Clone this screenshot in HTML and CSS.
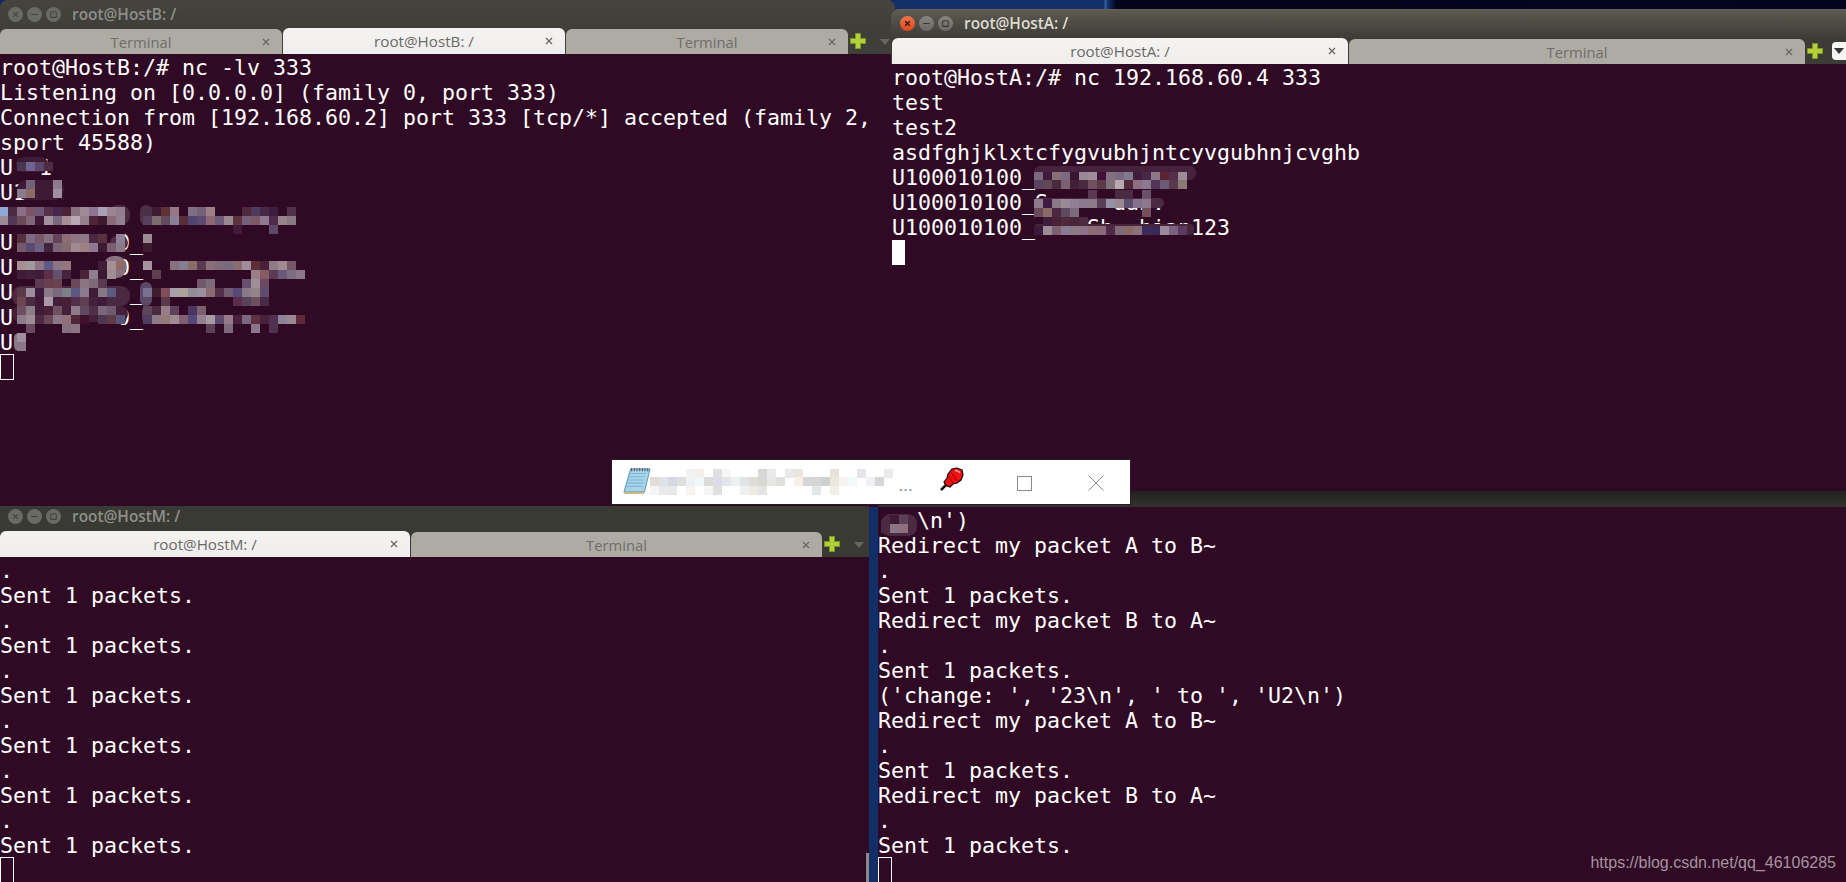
FILE: index.html
```html
<!DOCTYPE html>
<html lang="en">
<head>
<meta charset="utf-8">
<title>Terminals</title>
<link rel="stylesheet" href="styles.css">
</head>
<body>
<main class="desktop">

<section class="win win-b">
  <header class="titlebar dim"><span class="btn"><svg viewBox="0 0 16 16"><path d="M5.5 5.5l5 5M10.5 5.5l-5 5"/></svg></span><span class="btn"><svg viewBox="0 0 16 16"><path d="M4.5 8h7"/></svg></span><span class="btn"><svg viewBox="0 0 16 16"><rect x="5" y="5" width="6" height="6" rx="1"/></svg></span><span class="title">root@HostB: /</span></header>
  <nav class="tabs">
    <div class="tab tab-b"><span></span><span class="label">Terminal</span><span class="x"><svg viewBox="0 0 8 8"><path d="M1 1l6 6M7 1l-6 6"/></svg></span></div>
    <div class="tab tab-b on"><span></span><span class="label">root@HostB: /</span><span class="x"><svg viewBox="0 0 8 8"><path d="M1 1l6 6M7 1l-6 6"/></svg></span></div>
    <div class="tab tab-b"><span></span><span class="label">Terminal</span><span class="x"><svg viewBox="0 0 8 8"><path d="M1 1l6 6M7 1l-6 6"/></svg></span></div>
    <svg class="plus" viewBox="0 0 16 16"><path d="M5.5.5h5v5h5v5h-5v5h-5v-5h-5v-5h5z"/></svg>
    <span class="arrow arrow-b"></span>
  </nav>
  <div class="term">
<pre class="text">root@HostB:/# nc -lv 333
Listening on [0.0.0.0] (family 0, port 333)
Connection from [192.168.60.2] port 333 [tcp/*] accepted (family 2,
sport 45588)
U  1
U1

U        0_
U        0_
U         _
U        0_
U1
<span class="cursor hollow"></span></pre>
    <svg class="mosaic" aria-hidden="true"><g transform="translate(0,-54)">
      <rect x="16" y="157" width="32" height="15" rx="7" fill="#3d1a36"/>
      <rect x="17" y="180" width="47" height="20" rx="9" fill="#3f1a34"/>
      <rect x="108" y="205" width="22" height="20" rx="9" fill="#4a2b40"/>
      <rect x="140" y="205" width="12" height="20" rx="6" fill="#4b2f45"/>
      <rect x="110" y="236" width="18" height="14" rx="7" fill="#4f3048"/>
      <rect x="104" y="256" width="22" height="22" rx="9" fill="#8a7080"/>
      <rect x="12" y="286" width="118" height="20" rx="9" fill="#4a2a42"/>
      <rect x="140" y="282" width="12" height="24" rx="6" fill="#5a4a68"/>
      <rect x="12" y="306" width="116" height="16" rx="8" fill="#45203a"/>
      <rect x="142" y="306" width="12" height="18" rx="6" fill="#4e3d60"/>
      <rect x="14" y="333" width="12" height="18" rx="5" fill="#8a7888"/>
      <g class="cells">
        <rect x="17" y="162" fill="#4a3550"/><rect x="26" y="162" fill="#6f6390"/><rect x="35" y="162" fill="#5a4668"/><rect x="44" y="162" fill="#4f2b42"/>
        <rect x="26" y="180" fill="#75627a"/><rect x="53" y="180" fill="#8d7b90"/>
        <rect x="17" y="189" fill="#8a7a8c"/><rect x="26" y="189" fill="#8c6a66"/><rect x="53" y="189" fill="#a08fa0"/>

        <rect x="0" y="207" fill="#8ea8d8"/><rect x="8" y="207" fill="#4a2b40"/><rect x="17" y="207" fill="#8b6e85"/><rect x="26" y="207" fill="#7a5565"/><rect x="35" y="207" fill="#6e5775"/><rect x="44" y="207" fill="#54304a"/><rect x="53" y="207" fill="#45264f"/><rect x="62" y="207" fill="#4a2236"/><rect x="71" y="207" fill="#8a7080"/><rect x="80" y="207" fill="#a08a95"/><rect x="89" y="207" fill="#8b7590"/><rect x="98" y="207" fill="#aaa0b5"/><rect x="107" y="207" fill="#9b8594"/><rect x="116" y="207" fill="#917c90"/>
        <rect x="143" y="207" fill="#4b2f45"/><rect x="152" y="207" fill="#3f1a35"/><rect x="161" y="207" fill="#5e3238"/><rect x="170" y="207" fill="#957785"/><rect x="188" y="207" fill="#7e6f85"/><rect x="197" y="207" fill="#75627a"/><rect x="206" y="207" fill="#9c8088"/><rect x="242" y="207" fill="#50283c"/><rect x="251" y="207" fill="#4e3a5e"/><rect x="260" y="207" fill="#45284a"/><rect x="269" y="207" fill="#3e1c3c"/><rect x="287" y="207" fill="#4e3048"/>
        <rect x="0" y="216" fill="#9b8a95"/><rect x="8" y="216" fill="#503858"/><rect x="17" y="216" fill="#6b4a55"/><rect x="26" y="216" fill="#7c6878"/><rect x="35" y="216" fill="#3f1834"/><rect x="44" y="216" fill="#a48fa0"/><rect x="53" y="216" fill="#7a6880"/><rect x="62" y="216" fill="#a58c95"/><rect x="71" y="216" fill="#b8a8b5"/><rect x="80" y="216" fill="#958090"/><rect x="89" y="216" fill="#4f2535"/><rect x="98" y="216" fill="#3a1a30"/><rect x="107" y="216" fill="#8a6b75"/><rect x="116" y="216" fill="#918090"/>
        <rect x="143" y="216" fill="#573f5e"/><rect x="152" y="216" fill="#7d6d6a"/><rect x="161" y="216" fill="#614a5e"/><rect x="170" y="216" fill="#8a7e98"/><rect x="179" y="216" fill="#5a2c38"/><rect x="188" y="216" fill="#4f4570"/><rect x="197" y="216" fill="#5e4a6e"/><rect x="206" y="216" fill="#8d6a72"/><rect x="215" y="216" fill="#6e5a7a"/><rect x="224" y="216" fill="#9a8890"/><rect x="233" y="216" fill="#5e3340"/><rect x="242" y="216" fill="#75607a"/><rect x="251" y="216" fill="#7d5a65"/><rect x="260" y="216" fill="#907a90"/><rect x="269" y="216" fill="#4e2a4a"/><rect x="278" y="216" fill="#988488"/><rect x="287" y="216" fill="#887880"/>
        <rect x="233" y="225" fill="#42193a"/><rect x="269" y="225" fill="#5e4a68"/>

        <rect x="17" y="234" fill="#55303f"/><rect x="26" y="234" fill="#7e6a80"/><rect x="35" y="234" fill="#78586a"/><rect x="44" y="234" fill="#85707f"/><rect x="53" y="234" fill="#64445a"/><rect x="62" y="234" fill="#8c6d75"/><rect x="71" y="234" fill="#8f7580"/><rect x="80" y="234" fill="#8e7788"/><rect x="89" y="234" fill="#4a2940"/><rect x="98" y="234" fill="#5a3040"/><rect x="116" y="234" fill="#8f8098"/><rect x="143" y="234" fill="#9c8a96"/>
        <rect x="17" y="243" fill="#75596a"/><rect x="26" y="243" fill="#584a70"/><rect x="35" y="243" fill="#6f6080"/><rect x="44" y="243" fill="#432240"/><rect x="53" y="243" fill="#7d6578"/><rect x="62" y="243" fill="#856a70"/><rect x="71" y="243" fill="#a08c90"/><rect x="80" y="243" fill="#a07f80"/><rect x="89" y="243" fill="#8d7a90"/><rect x="98" y="243" fill="#3d1a34"/><rect x="107" y="243" fill="#7e5f6f"/><rect x="116" y="243" fill="#8a7a8c"/><rect x="143" y="243" fill="#3e1c30"/>

        <rect x="17" y="261" fill="#a88f95"/><rect x="26" y="261" fill="#a09a9e"/><rect x="35" y="261" fill="#8c7585"/><rect x="44" y="261" fill="#5f5a85"/><rect x="53" y="261" fill="#8a7585"/><rect x="62" y="261" fill="#96757d"/><rect x="98" y="261" fill="#3f1c3a"/><rect x="107" y="261" fill="#a58e95"/><rect x="116" y="261" fill="#8f6a66"/>
        <rect x="143" y="261" fill="#a494a0"/><rect x="170" y="261" fill="#8a6f80"/><rect x="179" y="261" fill="#847f8f"/><rect x="188" y="261" fill="#8a6e66"/><rect x="197" y="261" fill="#5a3a50"/><rect x="206" y="261" fill="#8a6f78"/><rect x="215" y="261" fill="#7f6a7a"/><rect x="224" y="261" fill="#7a6a80"/><rect x="233" y="261" fill="#886e70"/><rect x="242" y="261" fill="#a08d9b"/><rect x="251" y="261" fill="#5e2e38"/><rect x="260" y="261" fill="#4a2036"/><rect x="269" y="261" fill="#8f7a88"/><rect x="278" y="261" fill="#a08c90"/><rect x="287" y="261" fill="#78566a"/>
        <rect x="17" y="270" fill="#3f1c38"/><rect x="26" y="270" fill="#40203a"/><rect x="35" y="270" fill="#3f1c38"/><rect x="44" y="270" fill="#5e2f48"/><rect x="53" y="270" fill="#62506e"/><rect x="62" y="270" fill="#45243f"/><rect x="80" y="270" fill="#4a2438"/><rect x="89" y="270" fill="#8d7f90"/><rect x="98" y="270" fill="#3a1834"/><rect x="107" y="270" fill="#a08e94"/>
        <rect x="152" y="270" fill="#5f4050"/><rect x="251" y="270" fill="#9a7f8a"/><rect x="260" y="270" fill="#8a5c62"/><rect x="269" y="270" fill="#5a3a56"/><rect x="278" y="270" fill="#6a5a7a"/><rect x="287" y="270" fill="#7d6f80"/><rect x="296" y="270" fill="#8a7888"/>

        <rect x="35" y="279" fill="#5e3a50"/><rect x="44" y="279" fill="#6a4050"/><rect x="53" y="279" fill="#6a4550"/><rect x="71" y="279" fill="#6a4858"/><rect x="80" y="279" fill="#8c7580"/><rect x="89" y="279" fill="#7d6a78"/><rect x="98" y="279" fill="#5a3a50"/><rect x="197" y="279" fill="#6e5a6c"/><rect x="206" y="279" fill="#7d6b7a"/><rect x="242" y="279" fill="#6a5070"/><rect x="251" y="279" fill="#a08e98"/><rect x="260" y="279" fill="#6a4a62"/>
        <rect x="17" y="288" fill="#5a3a4a"/><rect x="26" y="288" fill="#9a8e9e"/><rect x="35" y="288" fill="#3f1a40"/><rect x="44" y="288" fill="#8a7a88"/><rect x="53" y="288" fill="#7a6a7c"/><rect x="62" y="288" fill="#7c8088"/><rect x="71" y="288" fill="#5e5880"/><rect x="80" y="288" fill="#8a7a8c"/><rect x="89" y="288" fill="#3f1c3a"/><rect x="98" y="288" fill="#8a7582"/><rect x="107" y="288" fill="#5c5a82"/>
        <rect x="143" y="288" fill="#7a7090"/><rect x="152" y="288" fill="#3f1c30"/><rect x="161" y="288" fill="#7e4f58"/><rect x="170" y="288" fill="#a9a0ae"/><rect x="179" y="288" fill="#aaa296"/><rect x="188" y="288" fill="#938a9a"/><rect x="197" y="288" fill="#9a8e9a"/><rect x="206" y="288" fill="#8c6a72"/><rect x="215" y="288" fill="#4f3048"/><rect x="224" y="288" fill="#6f5a70"/><rect x="233" y="288" fill="#554a78"/><rect x="242" y="288" fill="#8a7a88"/><rect x="251" y="288" fill="#938488"/><rect x="260" y="288" fill="#5e4d70"/>
        <rect x="17" y="297" fill="#6a4550"/><rect x="26" y="297" fill="#4a2a40"/><rect x="35" y="297" fill="#3f1a34"/><rect x="44" y="297" fill="#a89aa8"/><rect x="53" y="297" fill="#42203c"/><rect x="62" y="297" fill="#4a1f38"/><rect x="71" y="297" fill="#50304a"/><rect x="80" y="297" fill="#5e3f52"/><rect x="89" y="297" fill="#45203e"/><rect x="98" y="297" fill="#401a3a"/>
        <rect x="161" y="297" fill="#5a3a4a"/><rect x="233" y="297" fill="#5a2e48"/><rect x="242" y="297" fill="#58425a"/><rect x="251" y="297" fill="#6a5060"/><rect x="260" y="297" fill="#4a2a46"/>

        <rect x="17" y="306" fill="#6a5060"/><rect x="26" y="306" fill="#8c7c88"/><rect x="35" y="306" fill="#3f1c38"/><rect x="44" y="306" fill="#4a1f38"/><rect x="53" y="306" fill="#6e5060"/><rect x="71" y="306" fill="#8f7a88"/><rect x="80" y="306" fill="#5e4a60"/><rect x="89" y="306" fill="#4f3048"/><rect x="98" y="306" fill="#7a687a"/><rect x="107" y="306" fill="#6f5a70"/>
        <rect x="143" y="306" fill="#5e4558"/><rect x="152" y="306" fill="#4a2a3e"/><rect x="161" y="306" fill="#957e88"/><rect x="170" y="306" fill="#5e3f5c"/><rect x="188" y="306" fill="#4a3560"/><rect x="197" y="306" fill="#7a6070"/>
        <rect x="17" y="315" fill="#8e7a88"/><rect x="26" y="315" fill="#9c8c94"/><rect x="35" y="315" fill="#4e2840"/><rect x="44" y="315" fill="#6a4658"/><rect x="53" y="315" fill="#8a7785"/><rect x="62" y="315" fill="#8f7078"/><rect x="71" y="315" fill="#50253a"/><rect x="80" y="315" fill="#40102a"/><rect x="98" y="315" fill="#4e3850"/><rect x="107" y="315" fill="#5e3a4a"/><rect x="116" y="315" fill="#5a5278"/>
        <rect x="143" y="315" fill="#4e3d60"/><rect x="152" y="315" fill="#8f7a88"/><rect x="161" y="315" fill="#957a78"/><rect x="170" y="315" fill="#a08a94"/><rect x="179" y="315" fill="#7f5f70"/><rect x="188" y="315" fill="#54487a"/><rect x="197" y="315" fill="#938090"/><rect x="206" y="315" fill="#a89aa4"/><rect x="215" y="315" fill="#5e4a6e"/><rect x="224" y="315" fill="#957a8a"/><rect x="233" y="315" fill="#4a1f40"/><rect x="242" y="315" fill="#7a687c"/><rect x="251" y="315" fill="#603040"/><rect x="260" y="315" fill="#482038"/><rect x="269" y="315" fill="#503050"/><rect x="278" y="315" fill="#8e8298"/><rect x="287" y="315" fill="#9a8a90"/><rect x="296" y="315" fill="#5e2a38"/>
        <rect x="26" y="324" fill="#6a4a60"/><rect x="62" y="324" fill="#84707f"/><rect x="71" y="324" fill="#8a7580"/><rect x="206" y="324" fill="#5e4258"/><rect x="224" y="324" fill="#7e6a80"/><rect x="251" y="324" fill="#8a7688"/><rect x="269" y="324" fill="#4e3050"/>

        <rect x="17" y="333" fill="#a08f9e"/><rect x="17" y="342" fill="#8a7888"/>
      </g>
    </g></svg>
  </div>
</section>

<section class="win win-n">
  <header class="titlebar band"></header>
  <div class="term">
<pre class="text">   \n')
Redirect my packet A to B~
.
Sent 1 packets.
Redirect my packet B to A~
.
Sent 1 packets.
('change: ', '23\n', ' to ', 'U2\n')
Redirect my packet A to B~
.
Sent 1 packets.
Redirect my packet B to A~
.
Sent 1 packets.
<span class="cursor hollow"></span></pre>
    <svg class="mosaic" aria-hidden="true"><g transform="translate(-878,-507)">
      <rect x="881" y="514" width="36" height="22" rx="9" fill="#4a2a40"/>
      <g class="cells">
        <rect x="890" y="515" fill="#3e1a35"/><rect x="899" y="515" fill="#5a4058"/><rect x="881" y="524" fill="#4a2a3e"/><rect x="890" y="524" fill="#8a7584"/><rect x="899" y="524" fill="#8e707c"/>
      </g>
    </g></svg>
    <span class="watermark">https://blog.csdn.net/qq_46106285</span>
  </div>
</section>

<section class="win win-a">
  <header class="titlebar lit"><span class="btn red"><svg viewBox="0 0 16 16"><path d="M5.5 5.5l5 5M10.5 5.5l-5 5"/></svg></span><span class="btn"><svg viewBox="0 0 16 16"><path d="M4.5 8h7"/></svg></span><span class="btn"><svg viewBox="0 0 16 16"><rect x="5" y="5" width="6" height="6" rx="1"/></svg></span><span class="title">root@HostA: /</span></header>
  <nav class="tabs tabs-a">
    <div class="tab tab-a1 on"><span></span><span class="label">root@HostA: /</span><span class="x"><svg viewBox="0 0 8 8"><path d="M1 1l6 6M7 1l-6 6"/></svg></span></div>
    <div class="tab tab-a2"><span></span><span class="label">Terminal</span><span class="x"><svg viewBox="0 0 8 8"><path d="M1 1l6 6M7 1l-6 6"/></svg></span></div>
    <svg class="plus" viewBox="0 0 16 16"><path d="M5.5.5h5v5h5v5h-5v5h-5v-5h-5v-5h5z"/></svg>
    <span class="menu"><span class="arrow"></span></span>
  </nav>
  <div class="term term-a">
<pre class="text">root@HostA:/# nc 192.168.60.4 333
test
test2
asdfghjklxtcfygvubhjntcyvgubhnjcvghb
U100010100_
U100010100_S     uan.
U100010100_    Sh  hian123
<span class="cursor solid"></span></pre>
    <svg class="mosaic" aria-hidden="true"><g transform="translate(-891,-64)">
      <rect x="1034" y="166" width="162" height="14" rx="6" fill="#46223c"/>
      <rect x="1034" y="198" width="130" height="10" rx="5" fill="#4a2a40"/>
      <rect x="1034" y="224" width="160" height="11" rx="4" fill="#482438"/>
      <g class="cells">
        <rect x="1034" y="172" fill="#7a6a80"/><rect x="1043" y="172" fill="#3e1a3c"/><rect x="1052" y="172" fill="#8a6e78"/><rect x="1061" y="172" fill="#7a6880"/><rect x="1070" y="172" fill="#3a1430"/><rect x="1079" y="172" fill="#9a8898"/><rect x="1088" y="172" fill="#9f8d9c"/><rect x="1097" y="172" fill="#42103a"/><rect x="1106" y="172" fill="#82707f"/><rect x="1115" y="172" fill="#7a6a80"/><rect x="1124" y="172" fill="#7f7a8c"/><rect x="1133" y="172" fill="#3e1c3a"/><rect x="1142" y="172" fill="#45284a"/><rect x="1151" y="172" fill="#8c7888"/><rect x="1160" y="172" fill="#5a2430"/><rect x="1169" y="172" fill="#52304a"/><rect x="1178" y="172" fill="#9c8c98"/>
        <rect x="1034" y="180" fill="#5a4460"/><rect x="1043" y="180" fill="#614858"/><rect x="1052" y="180" fill="#4a2a3e"/><rect x="1061" y="180" fill="#7a6070"/><rect x="1070" y="180" fill="#42203a"/><rect x="1079" y="180" fill="#4a2a3e"/><rect x="1088" y="180" fill="#6e5060"/><rect x="1097" y="180" fill="#5a3a48"/><rect x="1106" y="180" fill="#80707a"/><rect x="1115" y="180" fill="#b5aab0"/><rect x="1124" y="180" fill="#53293a"/><rect x="1133" y="180" fill="#8a7080"/><rect x="1142" y="180" fill="#8a7a90"/><rect x="1151" y="180" fill="#54355a"/><rect x="1160" y="180" fill="#6a5a78"/><rect x="1169" y="180" fill="#5a3a4a"/><rect x="1178" y="180" fill="#8a7a70"/>
        <rect x="1088" y="190" fill="#5a3a50"/><rect x="1115" y="190" fill="#4a2a40"/><rect x="1124" y="190" fill="#4a2a44"/><rect x="1142" y="190" fill="#6a5068"/>
        <rect x="1034" y="199" fill="#8d7a8a"/><rect x="1043" y="199" fill="#3e1a44"/><rect x="1052" y="199" fill="#8a7a88"/><rect x="1061" y="199" fill="#9a8a96"/><rect x="1070" y="199" fill="#918095"/><rect x="1079" y="199" fill="#8a7a90"/><rect x="1088" y="199" fill="#8c7a88"/><rect x="1097" y="199" fill="#5a3e54"/><rect x="1106" y="199" fill="#9590a5"/><rect x="1115" y="199" fill="#9a8a90"/><rect x="1124" y="199" fill="#5c4c70"/><rect x="1133" y="199" fill="#87708a"/><rect x="1142" y="199" fill="#8c7890"/>
        <rect x="1034" y="208" fill="#6a4a58"/><rect x="1043" y="208" fill="#8a6a66"/><rect x="1052" y="208" fill="#4a2844"/><rect x="1061" y="208" fill="#5e4a5e"/><rect x="1070" y="208" fill="#7a6a7a"/><rect x="1142" y="208" fill="#75505a"/>
        <rect x="1043" y="217" fill="#3e1a3c"/><rect x="1052" y="217" fill="#4a2238"/><rect x="1061" y="217" fill="#4e2a3a"/><rect x="1070" y="217" fill="#482438"/><rect x="1079" y="217" fill="#4e2a40"/>
        <rect x="1034" y="226" fill="#3c1a3c"/><rect x="1043" y="226" fill="#9a8a9a"/><rect x="1052" y="226" fill="#7d6070"/><rect x="1061" y="226" fill="#8a7a95"/><rect x="1070" y="226" fill="#8a7a85"/><rect x="1079" y="226" fill="#8f708a"/><rect x="1088" y="226" fill="#8e6a75"/><rect x="1097" y="226" fill="#8a6a78"/><rect x="1106" y="226" fill="#4e2a48"/><rect x="1115" y="226" fill="#7f6a78"/><rect x="1124" y="226" fill="#8a6a68"/><rect x="1133" y="226" fill="#8a7078"/><rect x="1142" y="226" fill="#3e2a58"/><rect x="1151" y="226" fill="#3a2858"/><rect x="1160" y="226" fill="#9a8a9a"/><rect x="1169" y="226" fill="#7a6280"/><rect x="1178" y="226" fill="#5a3a60"/>
      </g>
    </g></svg>
  </div>
</section>

<section class="win win-m">
  <header class="titlebar dim dim-m"><span class="btn"><svg viewBox="0 0 16 16"><path d="M5.5 5.5l5 5M10.5 5.5l-5 5"/></svg></span><span class="btn"><svg viewBox="0 0 16 16"><path d="M4.5 8h7"/></svg></span><span class="btn"><svg viewBox="0 0 16 16"><rect x="5" y="5" width="6" height="6" rx="1"/></svg></span><span class="title">root@HostM: /</span></header>
  <nav class="tabs">
    <div class="tab tab-m1 on"><span></span><span class="label">root@HostM: /</span><span class="x"><svg viewBox="0 0 8 8"><path d="M1 1l6 6M7 1l-6 6"/></svg></span></div>
    <div class="tab tab-m2"><span></span><span class="label">Terminal</span><span class="x"><svg viewBox="0 0 8 8"><path d="M1 1l6 6M7 1l-6 6"/></svg></span></div>
    <svg class="plus" viewBox="0 0 16 16"><path d="M5.5.5h5v5h5v5h-5v5h-5v-5h-5v-5h5z"/></svg>
    <span class="arrow arrow-m"></span>
  </nav>
  <div class="term">
<pre class="text">.
Sent 1 packets.
.
Sent 1 packets.
.
Sent 1 packets.
.
Sent 1 packets.
.
Sent 1 packets.
.
Sent 1 packets.
<span class="cursor hollow"></span></pre>
    <span class="scrollbar"></span>
  </div>
</section>

<aside class="notice">
  <svg class="note-icon" viewBox="0 0 26 26" aria-hidden="true">
    <path d="M7 2h18l-5 21H1z" fill="#a8d4ea" stroke="#5f9fc0"/>
    <path d="M6 6h15M5 9h15M4 12h15M4 15h15M3 18h15" stroke="#7fb6d6" stroke-width="1"/>
    <path d="M1 23h19l-.6 2H1z" fill="#c9b98a"/>
    <path d="M8 1v3M10.500 1v3M13 1v3M15.500 1v3M18 1v3M20.500 1v3M23 1v3" stroke="#556" stroke-width="1"/>
  </svg>
  <div class="note-title">
    <svg class="note-blur" viewBox="0 0 250 36" aria-hidden="true"><g class="cells" transform="translate(-646,-464)">
      <rect x="682" y="469" fill="#f2f2f0"/><rect x="691" y="469" fill="#f5efe8"/><rect x="709" y="469" fill="#e0e0de"/><rect x="718" y="469" fill="#f8f6f2"/><rect x="754" y="469" fill="#d8d8d8"/><rect x="763" y="469" fill="#eaeaea"/><rect x="781" y="469" fill="#eaeaea"/><rect x="790" y="469" fill="#e9e5df"/><rect x="826" y="469" fill="#e8e2da"/><rect x="853" y="469" fill="#e6e6ea"/><rect x="880" y="469" fill="#ecebec"/>
      <rect x="646" y="477" fill="#e0dcd8"/><rect x="655" y="477" fill="#dfe2e6"/><rect x="664" y="477" fill="#d6d8e0"/><rect x="673" y="477" fill="#e0dfdf"/><rect x="682" y="477" fill="#eef2f5"/><rect x="691" y="477" fill="#f0f9fa"/><rect x="700" y="477" fill="#dddbd7"/><rect x="709" y="477" fill="#dcdde6"/><rect x="718" y="477" fill="#e2e6ea"/><rect x="727" y="477" fill="#eef2f5"/><rect x="736" y="477" fill="#e0e6e8"/><rect x="745" y="477" fill="#dfdcd8"/><rect x="754" y="477" fill="#d8d8d6"/><rect x="763" y="477" fill="#e6e6e3"/><rect x="772" y="477" fill="#e0dfdb"/><rect x="790" y="477" fill="#f5f1ea"/><rect x="799" y="477" fill="#d6d6d6"/><rect x="808" y="477" fill="#d6d6d6"/><rect x="817" y="477" fill="#cfd0d2"/><rect x="826" y="477" fill="#ece6dd"/><rect x="835" y="477" fill="#f5f3ef"/><rect x="844" y="477" fill="#f2fbfc"/><rect x="862" y="477" fill="#eef0f5"/><rect x="871" y="477" fill="#d6d6d6"/>
      <rect x="646" y="486" fill="#f5f5f5"/><rect x="655" y="486" fill="#eaeaea"/><rect x="664" y="486" fill="#e8e8e8"/><rect x="682" y="486" fill="#f8f3ee"/><rect x="700" y="486" fill="#f6f6f6"/><rect x="709" y="486" fill="#e0e0e0"/><rect x="736" y="486" fill="#f0f0f0"/><rect x="745" y="486" fill="#eeeae4"/><rect x="754" y="486" fill="#e4e4e4"/><rect x="808" y="486" fill="#e0e8ea"/><rect x="826" y="486" fill="#f2ede6"/>
    </g></svg>
    <span class="dots">...</span>
  </div>
  <svg class="pin" viewBox="0 0 24 24" aria-hidden="true">
    <path d="M1 23l6-6" stroke="#111" stroke-width="2.500"/>
    <path d="M4 15l3-4 1-4 4-5 5-1 5 2 1 5-2 5-4 3-4 1-3 3-3-1-2-2z" fill="#ee1111" stroke="#1a0000" stroke-width="1.200"/>
    <path d="M11 5l6 9M9 9l4 8" stroke="#b00000" stroke-width="1.200" fill="none"/>
    <path d="M15 3.500c2 0 4 1 5 2.500" stroke="#ff9a9a" stroke-width="1.500" fill="none"/>
  </svg>
  <span class="max"></span>
  <svg class="close" viewBox="0 0 16 16" aria-hidden="true"><path d="M.5.5l15 15M15.500.5l-15 15"/></svg>
</aside>

</main>
</body>
</html>
```
FILE: styles.css
```css
* { box-sizing: border-box; }
html, body { margin: 0; height: 100%; overflow: hidden; }
.desktop {
  position: relative;
  width: 1846px;
  height: 882px;
  overflow: hidden;
  background: linear-gradient(90deg, #12295f 0, #12306a 1104px, #3a63a8 1105px, #12306a 1108px, #04041c 1116px, #03051e 100%);
  font-family: "Open Sans", "Noto Sans", sans-serif;
}
.win { position: absolute; display: flex; flex-direction: column; }
.win-b { left: 0; top: 0; width: 895px; height: 507px; border-radius: 8px 8px 0 0; overflow: hidden; background: #3f3e39; }
.win-a { left: 891px; top: 9px; width: 955px; height: 482px; border-radius: 8px 0 0 0; overflow: hidden; background: #3c3b37; }
.win-m { left: 0; top: 506px; width: 869px; height: 376px; background: #3a3a35; }
.win-n { left: 878px; top: 491px; width: 968px; height: 391px; }

.titlebar { display: flex; align-items: center; flex: none; padding-left: 6px; }
.dim { height: 28px; background: linear-gradient(#45443e, #3f3e39); color: #8f8f8a; }
.dim-m { height: 25px; padding-bottom: 5px; background: #3a3a35; }
.lit { height: 29px; padding-left: 7px; background: linear-gradient(#63615a 0, #5b5950 2px, #3d3c37 100%); color: #dfdbd2; }
.band { height: 16px; padding: 0; background: linear-gradient(#20201e, #33332e); }
.btn { width: 15px; height: 15px; margin: 0 2px; border-radius: 50%; background: #6a6a65; display: flex; }
.btn svg { width: 100%; height: 100%; fill: none; stroke: #44443f; stroke-width: 1.200; }
.lit .btn { background: linear-gradient(#87857d, #6a6860); }
.lit .btn svg { stroke: #3a3a35; }
.lit .btn.red { background: linear-gradient(#f0734a, #d9481c); }
.lit .btn.red svg { stroke: #3c1a10; stroke-width: 1.500; }
.title { margin-left: 9px; font-size: 15.400px; font-weight: 600; }

.tabs { display: flex; height: 26px; flex: none; align-items: flex-end; gap: 1px; }
.tabs-a { padding-left: 1px; }
.tab {
  height: 25px;
  display: grid;
  grid-template-columns: 1fr auto 1fr;
  align-items: center;
  background: #aeaba5;
  color: #6f6e6a;
  border-radius: 6px 6px 0 0;
  font-size: 14.800px;
  flex: none;
}
.tab.on { height: 26px; font-size: 15.200px; background: linear-gradient(#f4f3f1, #efeeec); color: #6a6a66; }
.tab-b { width: 282px; }
.tab-a1 { width: 456px; }
.tab-a2 { width: 456px; }
.tab-m1 { width: 410px; }
.tab-m2 { width: 411px; }
.x { justify-self: end; margin-right: 12px; width: 8px; height: 8px; display: flex; }
.x svg { width: 8px; height: 8px; fill: none; stroke: #66655f; stroke-width: 1.200; }
.plus { width: 16px; height: 16px; flex: none; margin: 0 0 5px 1px; fill: #b3cf3c; stroke: #7c9a1e; stroke-width: 1; }
.arrow { width: 0; height: 0; border-left: 5px solid transparent; border-right: 5px solid transparent; border-top: 6px solid #66655f; }
.arrow-b { margin: 0 0 9px 13px; }
.arrow-m { margin: 0 0 9px 13px; }
.menu { width: 16px; height: 18px; margin: 0 0 4px 8px; background: #f6f6f4; border-radius: 4px 0 0 4px; display: flex; align-items: center; justify-content: center; }
.menu .arrow { border-top-color: #333; }

.term { position: relative; flex: 1; background: #300a24; overflow: hidden; }
.term-a { padding-left: 1px; }
.text {
  margin: 0;
  padding-top: 1px;
  font-family: "DejaVu Sans Mono", monospace;
  font-size: 21.600px;
  line-height: 25px;
  color: #fff;
}
.cursor { display: inline-block; vertical-align: top; height: 25px; }
.hollow { width: 14px; height: 26px; border: 1.500px solid #fff; transform: translateY(-1px); }
.solid { width: 13px; background: #fff; }
.mosaic { position: absolute; left: 0; top: 0; width: 100%; height: 100%; }
.cells rect { width: 9px; height: 9px; }
.scrollbar { position: absolute; right: 0; bottom: 0; width: 3px; height: 29px; background: #8a8a8a; }
.watermark {
  position: absolute;
  right: 10px;
  bottom: 9px;
  font-family: "Liberation Sans", Arial, sans-serif;
  font-size: 16px;
  line-height: 20px;
  color: #a593a1;
}

.notice {
  position: absolute;
  left: 611px;
  top: 459px;
  width: 520px;
  height: 46px;
  background: #fff;
  border: 1px solid #2a1a26;
  display: flex;
  align-items: center;
}
.note-icon { width: 28px; height: 28px; flex: none; margin: -3px -1px 0 11px; }
.note-title { position: relative; width: 266px; height: 36px; flex: none; }
.note-blur { position: absolute; left: 0; top: 0; width: 250px; height: 36px; }
.dots { position: absolute; left: 249px; top: 12px; font-size: 13px; line-height: 20px; font-weight: 700; letter-spacing: 1px; color: #8c97a8; }
.pin { width: 24px; height: 24px; flex: none; margin: -6px 0 0 24px; }
.max { width: 15px; height: 15px; flex: none; margin: 2px 0 0 53px; border: 1px solid #8a8a8a; }
.close { width: 16px; height: 16px; flex: none; margin: 2px 0 0 56px; fill: none; stroke: #8a8a8a; stroke-width: 1; }
```
